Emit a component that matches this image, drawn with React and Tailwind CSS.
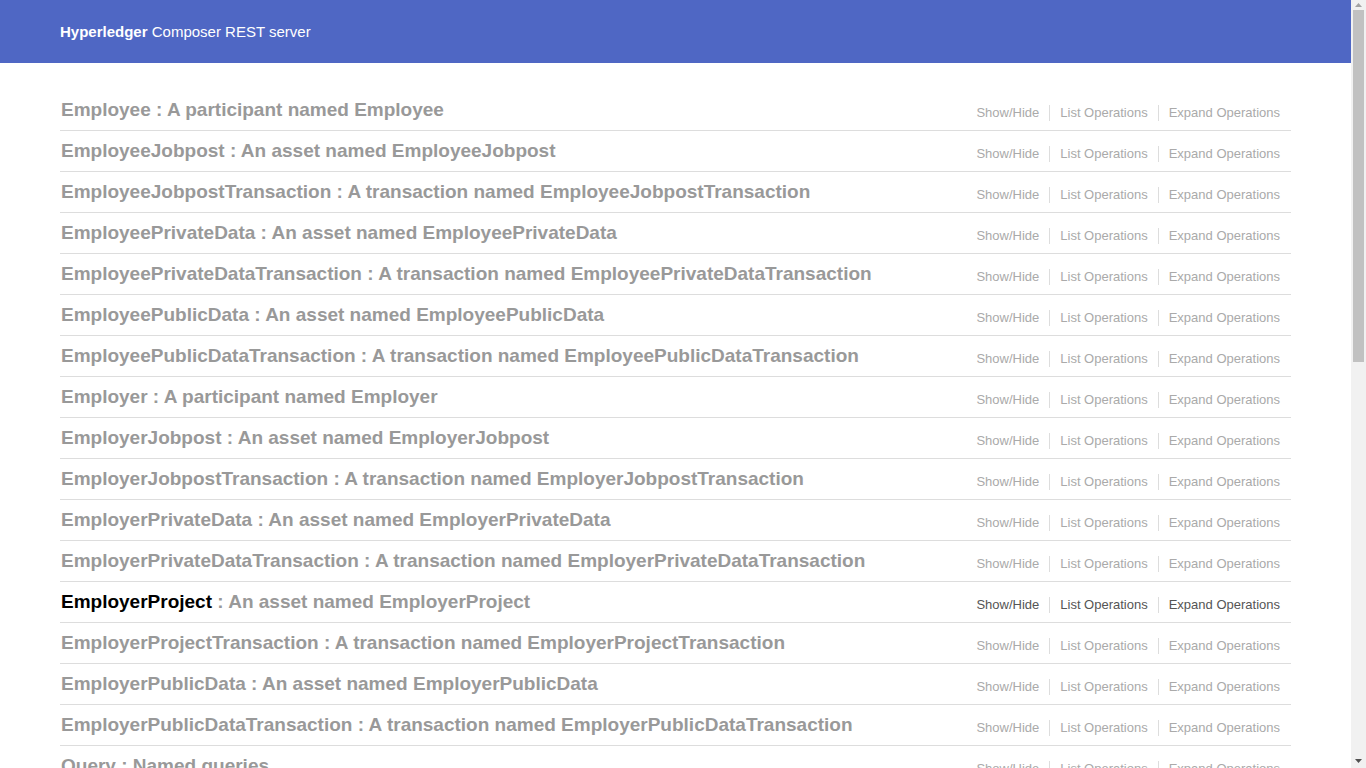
import React from 'react';

const resources = [
  { name: 'Employee', desc: 'A participant named Employee' },
  { name: 'EmployeeJobpost', desc: 'An asset named EmployeeJobpost' },
  { name: 'EmployeeJobpostTransaction', desc: 'A transaction named EmployeeJobpostTransaction' },
  { name: 'EmployeePrivateData', desc: 'An asset named EmployeePrivateData' },
  { name: 'EmployeePrivateDataTransaction', desc: 'A transaction named EmployeePrivateDataTransaction' },
  { name: 'EmployeePublicData', desc: 'An asset named EmployeePublicData' },
  { name: 'EmployeePublicDataTransaction', desc: 'A transaction named EmployeePublicDataTransaction' },
  { name: 'Employer', desc: 'A participant named Employer' },
  { name: 'EmployerJobpost', desc: 'An asset named EmployerJobpost' },
  { name: 'EmployerJobpostTransaction', desc: 'A transaction named EmployerJobpostTransaction' },
  { name: 'EmployerPrivateData', desc: 'An asset named EmployerPrivateData' },
  { name: 'EmployerPrivateDataTransaction', desc: 'A transaction named EmployerPrivateDataTransaction' },
  { name: 'EmployerProject', desc: 'An asset named EmployerProject', active: true },
  { name: 'EmployerProjectTransaction', desc: 'A transaction named EmployerProjectTransaction' },
  { name: 'EmployerPublicData', desc: 'An asset named EmployerPublicData' },
  { name: 'EmployerPublicDataTransaction', desc: 'A transaction named EmployerPublicDataTransaction' },
  { name: 'Query', desc: 'Named queries' },
  { name: 'System', desc: 'General business network methods' },
];

const ops = ['Show/Hide', 'List Operations', 'Expand Operations'];

function ResourceRow({ item }) {
  return (
    <li className="flex items-start justify-between border-b border-[#ddd] pt-[9px] pb-[9px]">
      <h2 className="text-[19px] font-bold leading-[21px] text-[#999] pl-px">
        <a href="#" className={item.active ? 'text-black' : 'text-[#999]'}>
          {item.name}
        </a>
        {' : '}
        {item.desc}
      </h2>
      <ul className="mt-[6px] mr-px flex">
        {ops.map((op, i) => (
          <li
            key={op}
            className={
              'px-[10px] text-[13px] leading-[16px] ' +
              (i < ops.length - 1 ? 'border-r border-[#ddd] ' : '') +
              (item.active ? 'text-[#555]' : 'text-[#aaa]')
            }
          >
            <a href="#">{op}</a>
          </li>
        ))}
      </ul>
    </li>
  );
}

// window scrollbar as seen in the screenshot
function Scrollbar() {
  return (
    <div className="flex h-full w-[15px] shrink-0 flex-col bg-[#f1f1f1]">
      <div className="flex h-[10px] items-center justify-center">
        <svg width="7" height="4" viewBox="0 0 7 4">
          <path d="M3.5 0L7 4H0z" fill="#a3a3a3" />
        </svg>
      </div>
      <div className="flex-1 px-[2px]">
        <div className="h-[352px] bg-[#c1c1c1]" />
      </div>
      <div className="flex h-[15px] items-center justify-center">
        <svg width="7" height="4" viewBox="0 0 7 4">
          <path d="M0 0H7L3.5 4z" fill="#505050" />
        </svg>
      </div>
    </div>
  );
}

export default function App() {
  return (
    <div className="flex h-screen bg-white font-['Liberation_Sans',Arial,sans-serif]">
      <div className="min-w-0 flex-1 overflow-hidden">
        <header className="flex h-[63px] items-center bg-[#4f67c4] px-[60px] pt-px">
          <span className="text-[15px] text-white">
            <b>Hyperledger</b> Composer REST server
          </span>
        </header>

        <main className="px-[60px] pt-[27px]">
          <ul>
            {resources.map((item) => (
              <ResourceRow key={item.name} item={item} />
            ))}
          </ul>
          <div className="pt-[20px] text-center text-[11px] text-[#999]">
            [ base url: /api , api version: 0.19.5 ]
          </div>
        </main>
      </div>
      <Scrollbar />
    </div>
  );
}
